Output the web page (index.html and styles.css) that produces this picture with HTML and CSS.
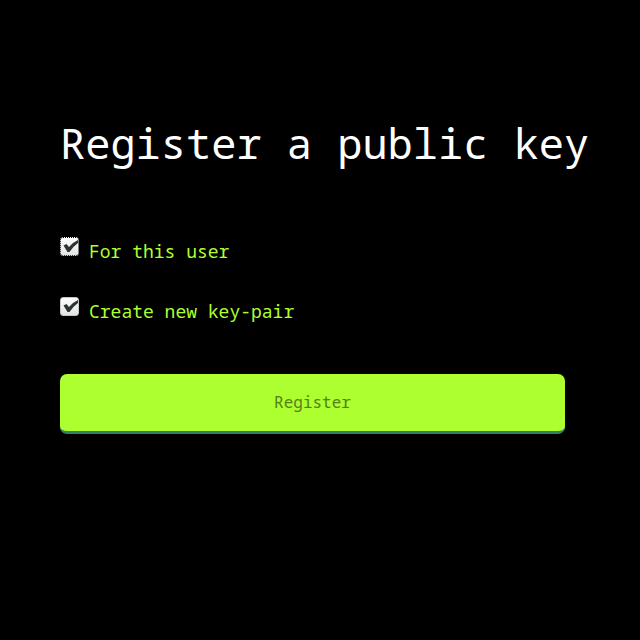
FILE: index.html
```html
<!DOCTYPE html>
<html lang="en">
<head>
<meta charset="utf-8">
<title>Register a public key</title>
<link rel="stylesheet" href="styles.css">
</head>
<body>
<main class="page">
<h1 class="title">Register a public key</h1>
<form class="form">
<div class="option"><input class="box focused" type="checkbox" id="user" checked><label for="user">For this user</label></div>
<div class="option"><input class="box" type="checkbox" id="pair" checked><label for="pair">Create new key-pair</label></div>
<button class="submit" type="button">Register</button>
</form>
</main>
</body>
</html>
```
FILE: styles.css
```css
* { box-sizing: border-box; }
body { margin: 0; background: #000; color: #fff; font-family: "Noto Sans Mono", "DejaVu Sans Mono", monospace; }
.page { padding: 115px 75px 60px 60px; }
.title { margin: 0 0 61px; font-size: 42px; line-height: 56px; font-weight: 400; white-space: nowrap; }
.option { display: flex; gap: 10px; height: 60px; color: #adff2f; font-size: 18px; line-height: 38px; }
.box {
  appearance: none;
  margin: 5px 0 0;
  width: 19px;
  height: 19px;
  border: 1px solid #c4c6c8;
  border-radius: 3px;
  background: url("data:image/svg+xml,%3Csvg xmlns='http://www.w3.org/2000/svg' viewBox='0 0 17 17'%3E%3Cpath d='M2.5 7.5L5.5 6L8 9Q11.5 4.5 17 2V5Q11.5 9 8.5 14H6.5Z' fill='%232e3436'/%3E%3C/svg%3E") center / 17px 17px no-repeat, linear-gradient(#fff, #e4e4e4);
}
.focused { border-color: #fff; outline: 1px dotted #000; outline-offset: -1px; }
.submit { width: 100%; height: 60px; margin-top: 22px; padding: 0 0 1px; border: 0; border-bottom: 3px solid #2e8267; border-radius: 7px; background: #adff2f; color: #568017; font: inherit; font-size: 16px; }
```
